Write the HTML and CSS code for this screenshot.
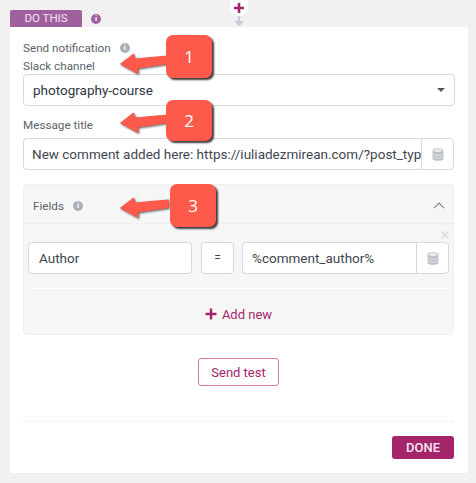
FILE: index.html
```html
<!DOCTYPE html>
<html>
<head>
  <title>Do this</title>
  <link rel="stylesheet" href="styles.css">
</head>
<body>
  <div class="connector">
    <span class="plus-circle">
      <svg width="12" height="12" viewBox="0 0 12 12"><path d="M6 1v10M1 6h10" stroke="#a4256a" stroke-width="2.600"/></svg>
    </span>
    <svg class="down-arrow" width="10" height="11" viewBox="0 0 10 11"><path d="M3.700 0h2.600v5H10L5 10.500 0 5h3.700z" fill="#c5ced6"/></svg>
  </div>

  <div class="tab-row">
    <div class="tab">DO THIS</div>
    <span class="info info-purple">i</span>
  </div>

  <div class="card">
    <div class="title-row">
      <span>Send notification</span>
      <span class="info info-grey">i</span>
    </div>
    <label class="label">Slack channel</label>
    <div class="input select">
      <span>photography-course</span>
      <span class="caret"></span>
    </div>

    <label class="label label-message">Message title</label>
    <div class="input-group message-group">
      <div class="input grouped">New comment added here: https://iuliadezmirean.com/?post_type=</div>
      <div class="db-btn">
        <svg width="12" height="13" viewBox="0 0 12 13"><use href="#db"/></svg>
      </div>
    </div>

    <div class="fields">
      <div class="fields-head">
        <span>Fields</span>
        <span class="info info-grey">i</span>
        <svg class="chevron" width="12" height="7" viewBox="0 0 12 7"><path d="M1 6.200 6 1l5 5.200" fill="none" stroke="#7b8088" stroke-width="1.100"/></svg>
      </div>
      <div class="remove-row">
        <svg width="8" height="8" viewBox="0 0 8 8"><path d="M.5.5l7 7M7.500.5l-7 7" stroke="#d5d8dd" stroke-width="1.200"/></svg>
      </div>
      <div class="field-row">
        <div class="input field-name">Author</div>
        <div class="input field-eq">=</div>
        <div class="input-group field-value">
          <div class="input grouped">%comment_author%</div>
          <div class="db-btn">
            <svg width="12" height="13" viewBox="0 0 12 13"><use href="#db"/></svg>
          </div>
        </div>
      </div>
      <div class="add-new">
        <svg width="12" height="12" viewBox="0 0 12 12"><path d="M6 .5v11M.5 6h11" stroke="#a4256a" stroke-width="2.400"/></svg>
        <span>Add new</span>
      </div>
    </div>

    <div class="test-row">
      <button class="btn-test">Send test</button>
    </div>

    <div class="card-foot">
      <button class="btn-done">DONE</button>
    </div>
  </div>

  <!-- annotations sitting on top of the form -->
  <svg class="arrow arrow-1" width="52" height="22" viewBox="0 0 52 22"><use href="#arrow"/></svg>
  <svg class="arrow arrow-2" width="52" height="22" viewBox="0 0 52 22"><use href="#arrow"/></svg>
  <svg class="arrow arrow-3" width="52" height="22" viewBox="0 0 52 22"><use href="#arrow"/></svg>
  <div class="callout callout-1">1</div>
  <div class="callout callout-2">2</div>
  <div class="callout callout-3">3</div>

  <svg width="0" height="0" class="defs">
    <defs>
      <g id="db">
        <path d="M.5 2.500C.5 1 3 .2 6 .2s5.500.8 5.500 2.300v8c0 1.500-2.500 2.300-5.500 2.300S.5 12 .5 10.500z" fill="#bcc1c7"/>
        <path d="M1.500 2.600C1.500 1.700 3.500 1.200 6 1.200s4.500.5 4.500 1.400S8.500 4 6 4 1.500 3.500 1.500 2.600z" fill="#eceef0"/>
        <path d="M.5 5.400c.6 1.200 2.800 1.900 5.500 1.900s4.900-.7 5.500-1.900M.5 8.300c.6 1.200 2.800 1.900 5.500 1.900s4.900-.7 5.500-1.900" fill="none" stroke="#eceef0" stroke-width=".8"/>
      </g>
      <g id="arrow">
        <path d="M.5 11 13.500 1l1 5 34-3v7.500L17.500 15l.5 5.500z" fill="#fe5a4b" stroke="#fe5a4b" stroke-width="1" stroke-linejoin="round"/>
      </g>
    </defs>
  </svg>
</body>
</html>
```
FILE: styles.css
```css
* {
  box-sizing: border-box;
}

body {
  font-family: Roboto, Arial, sans-serif;
  margin: 0;
  padding: 10px 8px 10px 10px;
  background-color: #f1f1f1;
  color: #5c626b;
  font-size: 11.7px;
  position: relative;
  height: 483px;
  overflow: hidden;
}

.defs {
  position: absolute;
}

.connector {
  position: absolute;
  left: 230px;
  top: 0;
  width: 18px;
  display: flex;
  flex-direction: column;
  align-items: center;
}

.plus-circle {
  width: 18px;
  height: 16px;
  background-color: #fff;
  border-radius: 0 0 9px 9px;
  display: flex;
  align-items: center;
  justify-content: center;
}

.tab-row {
  display: flex;
  align-items: center;
  height: 17px;
}

.tab {
  width: 72px;
  height: 17px;
  background-color: #a0609f;
  color: #f3e6f1;
  font-size: 11.5px;
  line-height: 17px;
  text-align: center;
  border-radius: 2px 2px 0 0;
}

.info {
  width: 10px;
  height: 10px;
  border-radius: 50%;
  color: #fff;
  font-size: 8px;
  font-weight: 700;
  line-height: 10px;
  text-align: center;
  display: inline-block;
}

.info-purple {
  background-color: #a0609f;
  margin-left: 9px;
}

.info-grey {
  background-color: #a9b1b8;
  margin-left: 9px;
}

.card {
  background-color: #fff;
  border-radius: 0 0 3px 3px;
  height: 446px;
  padding: 14px 13px 0 13px;
}

.title-row {
  display: flex;
  align-items: center;
  height: 13px;
  margin-bottom: 5px;
}

.label {
  display: block;
  line-height: 15px;
  height: 15px;
}

.label-message {
  margin-top: 12px;
  margin-bottom: 5px;
}

.input {
  height: 32px;
  border: 1px solid #d5d9e0;
  border-radius: 4px;
  background-color: #fff;
  color: #3f4650;
  font-size: 13.5px;
  line-height: 30px;
  padding: 0 8px;
  white-space: nowrap;
  overflow: hidden;
}

.select {
  width: 432px;
  padding: 0 9px;
  color: #2f3640;
  display: flex;
  align-items: center;
  justify-content: space-between;
}

.caret {
  width: 0;
  height: 0;
  border-left: 4px solid transparent;
  border-right: 4px solid transparent;
  border-top: 4px solid #50565f;
}

.input-group {
  display: flex;
  height: 32px;
}

.message-group {
  width: 431px;
}

.input-group .grouped {
  flex: 1;
  min-width: 0;
  border-right: 0;
  border-radius: 4px 0 0 4px;
}

.db-btn {
  flex: 0 0 33px;
  border: 1px solid #d5d9e0;
  border-radius: 0 4px 4px 0;
  background-color: #fff;
  display: flex;
  align-items: center;
  justify-content: center;
}

.fields {
  height: 151px;
  margin-top: 14px;
  width: 431px;
  background-color: #f6f6f7;
  border: 1px solid #eeeff1;
  border-radius: 4px;
}

.fields-head {
  display: flex;
  align-items: center;
  height: 39px;
  padding: 3px 8px 0 9px;
  border-bottom: 1px dotted #e6e7ea;
}

.chevron {
  margin-left: auto;
}

.remove-row {
  height: 18px;
  padding: 7px 4px 0 0;
  display: flex;
  justify-content: flex-end;
}

.field-row {
  display: flex;
  padding: 0 4px;
  height: 32px;
}

.field-name {
  width: 164px;
  padding: 0 10px;
}

.field-eq {
  width: 33px;
  margin-left: 9px;
  font-size: 12px;
  text-align: center;
  padding: 0;
}

.field-value {
  width: 207px;
  margin-left: 8px;
}

.field-value .grouped {
  padding: 0 9px;
}

.add-new {
  margin: 14px 4px 0;
  border-top: 1px solid #fff;
  height: 46px;
  padding-top: 5px;
  display: flex;
  align-items: center;
  justify-content: center;
  gap: 5px;
  color: #a4256a;
  font-size: 13px;
}

.test-row {
  display: flex;
  justify-content: center;
  margin-top: 23px;
}

.btn-test {
  width: 81px;
  height: 28px;
  margin-right: 1px;
  background-color: #fff;
  border: 1px solid #d678a8;
  border-radius: 3px;
  color: #a4256a;
  font-family: Roboto, Arial, sans-serif;
  font-size: 13px;
  padding: 0;
}

.card-foot {
  margin-top: 35px;
  border-top: 1px dotted #e6e7ea;
  padding-top: 14px;
  display: flex;
  justify-content: flex-end;
  width: 431px;
}

.btn-done {
  width: 62px;
  height: 23px;
  background-color: #a4256a;
  border: 0;
  border-radius: 3px;
  color: #f6e8f0;
  font-family: Roboto, Arial, sans-serif;
  font-size: 13px;
  font-weight: 500;
  padding: 0;
}

.callout {
  position: absolute;
  width: 46px;
  height: 43px;
  background-color: #fe5a4b;
  border-radius: 7px;
  color: #fff;
  font-family: "Open Sans", Arial, sans-serif;
  font-size: 17px;
  line-height: 43px;
  text-align: center;
  box-shadow: 2px 2px 2px rgba(30, 25, 25, 0.85);
}

.callout-1 {
  left: 166px;
  top: 35px;
}

.callout-2 {
  left: 166px;
  top: 100px;
  height: 41px;
  line-height: 41px;
}

.callout-3 {
  left: 170px;
  top: 184px;
}

.arrow {
  position: absolute;
  filter: drop-shadow(1px 1px 1px rgba(30, 25, 25, 0.7));
}

.arrow-1 {
  left: 120px;
  top: 53px;
}

.arrow-2 {
  left: 120px;
  top: 112px;
}

.arrow-3 {
  left: 120px;
  top: 197px;
}
```
